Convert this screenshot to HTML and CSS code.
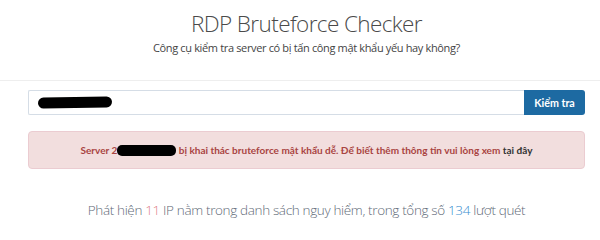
FILE: index.html
```html
<!DOCTYPE html>
<html lang="vi">
<head>
<meta charset="utf-8">
<title>RDP Bruteforce Checker</title>
<link rel="stylesheet" href="styles.css">
</head>
<body>
<header class="header">
  <div class="container">
    <h1 class="title">RDP Bruteforce Checker</h1>
    <p class="subtitle">Công cụ kiểm tra server có bị tấn công mật khẩu yếu hay không?</p>
  </div>
</header>
<main class="container main">
  <form class="check-form">
    <div class="input"><span class="redact redact-input"></span></div>
    <button type="button" class="btn">Kiểm tra</button>
  </form>
  <div class="alert">
    <span class="alert-text">Server 2<span class="redact redact-alert"></span> bị khai thác bruteforce mật khẩu dễ. Để biết thêm thông tin vui lòng xem <a class="alert-link" href="#">tại đây</a></span>
  </div>
  <p class="stats">Phát hiện <span class="num-red">11</span> IP nằm trong danh sách nguy hiểm, trong tổng số <span class="num-blue">134</span> lượt quét</p>
</main>
</body>
</html>
```

FILE: styles.css
```css
* { box-sizing: border-box; }
html, body { margin: 0; padding: 0; background: #fff; }
body { font-family: "Open Sans", "Noto Sans", sans-serif; color: #333; }

.container {
  margin-left: 28px;
  width: 557px;
}

.header {
  height: 81px;
  border-bottom: 1px solid #eeeeee;
  text-align: center;
  padding-top: 10px;
}
.title {
  margin: 0;
  font-weight: 300;
  font-size: 22.5px;
  line-height: 28px;
  letter-spacing: -0.6px;
  color: #4a4a4a;
}
.subtitle {
  margin: 3px 0 0;
  font-size: 11px;
  line-height: 14px;
  letter-spacing: -0.35px;
  color: #444;
}

.main {
  padding-top: 9px;
}
.check-form {
  display: flex;
  height: 25px;
}
.input {
  flex: 1;
  border: 1px solid #d5dde6;
  border-right: none;
  border-radius: 2px 0 0 2px;
  display: flex;
  align-items: center;
  padding-left: 9px;
}
.redact {
  display: inline-block;
  background: #000;
  border-radius: 6px;
}
.redact-input { width: 74px; height: 11px; transform: rotate(-1deg); }
.redact-alert { width: 59px; height: 11px; vertical-align: -2px; border-radius: 5px; }

.btn {
  width: 61px;
  height: 25px;
  border: none;
  background: #1d6aa2;
  color: #fff;
  font-family: "Lato", sans-serif;
  font-weight: 700;
  font-size: 10.7px;
  border-radius: 0 3px 3px 0;
  padding: 0;
}

.alert {
  margin-top: 16px;
  height: 38px;
  background: #f2dede;
  border: 1px solid #ebccd1;
  border-radius: 4px;
  display: flex;
  align-items: center;
  justify-content: center;
  font-family: "Lato", sans-serif;
  font-weight: 700;
  font-size: 10px;
  color: #a94442;
}
.alert-link { color: #333; text-decoration: none; font-weight: 700; }

.stats {
  margin: 32px 0 0;
  text-align: center;
  font-size: 13.5px;
  line-height: 18px;
  letter-spacing: -0.35px;
  font-weight: 300;
  color: #5f6b78;
}
.num-red { color: #e0828a; }
.num-blue { color: #3a8fd0; }
```
